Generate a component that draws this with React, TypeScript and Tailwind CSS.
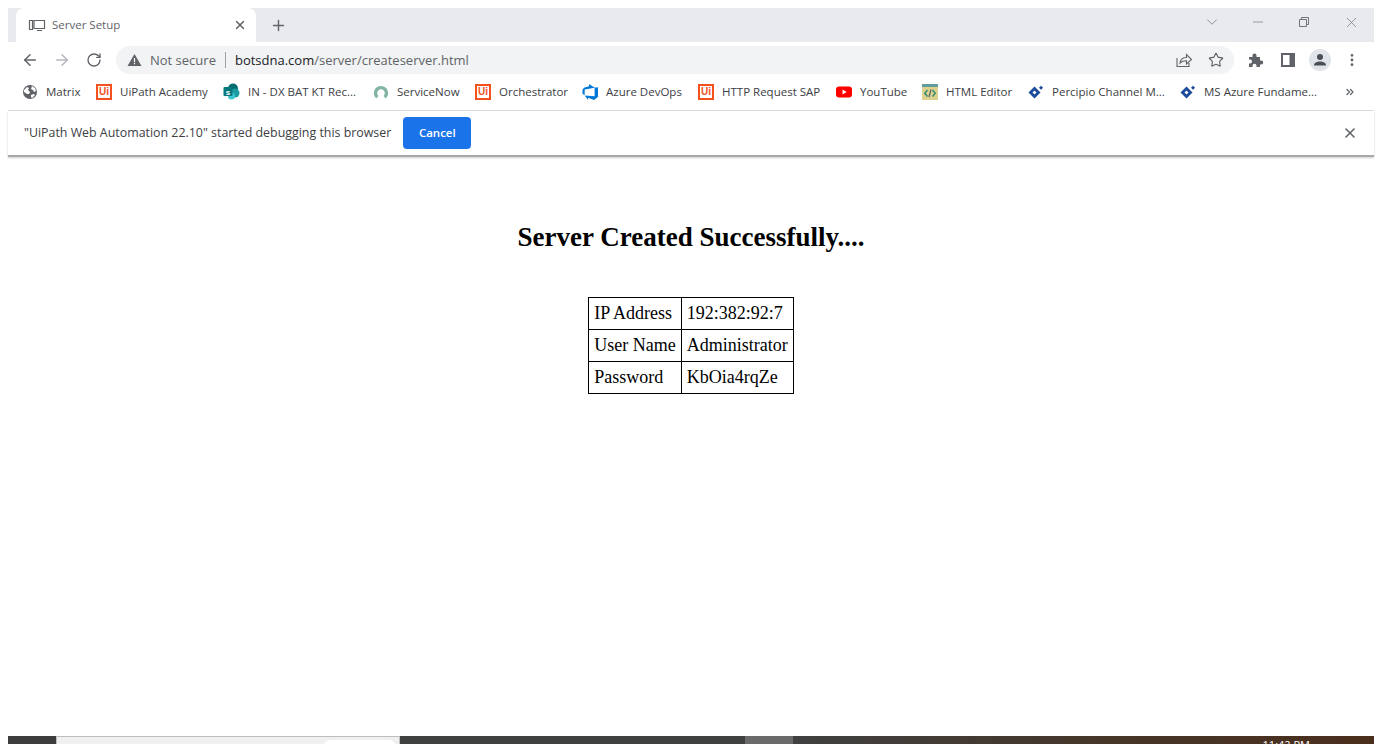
import { ArrowLeft, ArrowRight, RotateCw, Star, Plus, X, Minus, ChevronDown, ChevronsRight, MoreVertical } from "lucide-react";
import type { ReactNode } from "react";

function UiLogo() {
  return (
    <span className="flex h-4 w-4 shrink-0 items-center justify-center border-2 border-[#f4511e] font-['Liberation_Sans',sans-serif] text-[10px] font-bold leading-none text-[#f4511e]">
      Ui
    </span>
  );
}

function GlobeIcon() {
  return (
    <svg width="16" height="16" viewBox="0 0 16 16" className="shrink-0">
      <circle cx="8" cy="8" r="7" fill="#5f6368" />
      <path d="M2 6l3-3 2 1-1 2 2 2-1 2H5L2 8zM10 2l3 2 1 3-2 1-1-2-2-1zM9 11l3-1 1 1-3 3-1-1z" fill="#fff" />
    </svg>
  );
}

function SharePointIcon() {
  return (
    <svg width="17" height="17" viewBox="0 0 17 17" className="shrink-0">
      <circle cx="10" cy="5.5" r="5" fill="#036c70" />
      <circle cx="12" cy="10" r="4.5" fill="#1a9ba1" />
      <circle cx="8.5" cy="13" r="3.5" fill="#37c6d0" />
      <rect x="0.5" y="4" width="9" height="9" rx="1" fill="#03787c" />
      <text x="5" y="11.5" textAnchor="middle" fontSize="8" fontWeight="700" fill="#fff" fontFamily="Liberation Sans, sans-serif">s</text>
    </svg>
  );
}

function ServiceNowIcon() {
  return (
    <svg width="16" height="16" viewBox="0 0 16 16" className="shrink-0">
      <path d="M4.3 13.2a5.5 5.5 0 117.4 0" fill="none" stroke="#81b5a1" strokeWidth="3.4" />
    </svg>
  );
}

function AzureDevOpsIcon() {
  return (
    <svg width="16" height="16" viewBox="0 0 16 16" className="shrink-0">
      <path d="M16 3.2v9.5l-3.9 3.2-6-2.2v2.2L2.7 11.5l9.9.8V3.8zM12.7 3.7L7.1 0v2.2L2 3.8.5 5.7v4.4l2.2 1V5.4z" fill="#0078d7" />
    </svg>
  );
}

function YouTubeIcon() {
  return (
    <svg width="16" height="16" viewBox="0 0 16 16" className="shrink-0">
      <rect x="0" y="2.5" width="16" height="11" rx="3" fill="#ff0000" />
      <path d="M6.5 5.6L10.7 8l-4.2 2.4z" fill="#fff" />
    </svg>
  );
}

function HtmlEditorIcon() {
  return (
    <svg width="16" height="16" viewBox="0 0 16 16" className="shrink-0">
      <rect width="16" height="16" fill="#dcd28e" />
      <rect width="16" height="3" fill="#5f9c9c" />
      <path d="M5.5 6L2.8 9.2l2.7 3.2" fill="none" stroke="#3f8f72" strokeWidth="1.6" />
      <path d="M10.5 6l2.7 3.2-2.7 3.2" fill="none" stroke="#3f8f72" strokeWidth="1.6" />
      <path d="M9 5.5l-2 7.5" fill="none" stroke="#55606a" strokeWidth="1.2" />
    </svg>
  );
}

function PercipioIcon() {
  return (
    <svg width="16" height="16" viewBox="0 0 16 16" className="shrink-0">
      <path d="M6.5 2.5L12.5 8.5 6.5 14.5.5 8.5z" fill="#1c4a9c" />
      <path d="M6.5 6.5L8.5 8.5 6.5 10.5 4.5 8.5z" fill="#fff" />
      <path d="M13 1.8l2 2-2 2-2-2z" fill="#1c4a9c" />
    </svg>
  );
}

const bookmarks: { icon: ReactNode; label: string; width: string }[] = [
  { icon: <GlobeIcon />, label: "Matrix", width: "w-[74px]" },
  { icon: <UiLogo />, label: "UiPath Academy", width: "w-[127px]" },
  { icon: <SharePointIcon />, label: "IN - DX BAT KT Rec...", width: "w-[150px]" },
  { icon: <ServiceNowIcon />, label: "ServiceNow", width: "w-[102px]" },
  { icon: <UiLogo />, label: "Orchestrator", width: "w-[107px]" },
  { icon: <AzureDevOpsIcon />, label: "Azure DevOps", width: "w-[116px]" },
  { icon: <UiLogo />, label: "HTTP Request SAP", width: "w-[138px]" },
  { icon: <YouTubeIcon />, label: "YouTube", width: "w-[86px]" },
  { icon: <HtmlEditorIcon />, label: "HTML Editor", width: "w-[106px]" },
  { icon: <PercipioIcon />, label: "Percipio Channel M...", width: "w-[152px]" },
  { icon: <PercipioIcon />, label: "MS Azure Fundame...", width: "w-[156px]" },
];

const rows = [
  ["IP Address", "192:382:92:7"],
  ["User Name", "Administrator"],
  ["Password", "KbOia4rqZe"],
];

export default function App() {
  return (
    <div className="flex h-[744px] w-[1382px] flex-col overflow-hidden bg-white px-2 pt-2 font-['Open_Sans',sans-serif]">
      {/* tab strip */}
      <div className="flex h-[34px] shrink-0 items-end bg-[#e8eaed] pl-2">
        <div className="flex h-[34px] w-[240px] items-center rounded-t-lg bg-white pl-3 pr-[9px]">
          <svg width="18" height="14" viewBox="0 0 18 14" className="shrink-0">
            <path d="M1.5 2.5h3v9h-3zM6 2.5h10.5v8H6zM9 12.5h5" fill="none" stroke="#5f6368" strokeWidth="1.2" />
          </svg>
          <span className="ml-[6px] text-[11.5px] text-[#5f6368]">Server Setup</span>
          <X size={14} strokeWidth={2.5} className="ml-auto text-[#5f6368]" />
        </div>
        <div className="flex h-[34px] w-[44px] items-center justify-center">
          <Plus size={17} strokeWidth={2} className="text-[#5f6368]" />
        </div>
        <div className="ml-auto flex h-7 items-center self-start text-[#70757a]">
          <ChevronDown size={18} strokeWidth={1} className="mr-[29px]" />
          <Minus size={16} strokeWidth={1} className="mr-[32px]" />
          <svg width="12" height="12" viewBox="0 0 12 12" className="mr-[33px]">
            <path d="M1.5 3.5h7v7h-7zM3.5 3.5v-2h7v7h-2" fill="none" stroke="#70757a" strokeWidth="1" />
          </svg>
          <X size={17} strokeWidth={1} className="mr-[14px]" />
        </div>
      </div>

      {/* toolbar */}
      <div className="flex h-9 shrink-0 items-center bg-white pl-[13px]">
        <ArrowLeft size={18} strokeWidth={2} className="text-[#5f6368]" />
        <ArrowRight size={18} strokeWidth={2} className="ml-[14px] text-[#b4b7bb]" />
        <RotateCw size={16} strokeWidth={2} className="ml-[15px] text-[#5f6368]" />
        <div className="ml-[14px] flex h-7 w-[1118px] items-center rounded-full bg-[#f1f3f4] pl-[11px] pr-[10px]">
          <svg width="15" height="14" viewBox="0 0 15 14" className="shrink-0">
            <path d="M7.5 1L14.5 13H.5z" fill="#5f6368" />
            <path d="M6.9 5h1.2v4.2H6.9zM6.9 10h1.2v1.2H6.9z" fill="#fff" />
          </svg>
          <span className="ml-2 pt-px text-[13px] text-[#5f6368]">Not secure</span>
          <span className="ml-[9px] h-4 w-px bg-[#9aa0a6]" />
          <span className="ml-[9px] pt-px text-[13px] text-[#202124]">
            botsdna.com<span className="text-[#5f6368]">/server/createserver.html</span>
          </span>
          <svg width="16" height="16" viewBox="0 0 16 16" className="ml-auto">
            <path d="M1 6v8.5h12V11M4 11c.5-3.5 3-5.5 6.5-5.5V2.5l5 5-5 4.5V8.8C8 8.8 5.5 9.5 4 11z" fill="none" stroke="#5f6368" strokeWidth="1.1" />
          </svg>
          <Star size={16} strokeWidth={1.7} className="ml-[16px] text-[#5f6368]" />
        </div>
        <svg width="16" height="16" viewBox="0 0 16 16" className="ml-[14px]">
          <path d="M1 5h3.5V3.5a2 2 0 014 0V5H12v3.5h1.2a2 2 0 010 4H12V15H8.5v-1.2a2 2 0 00-4 0V15H1v-3.5h1a2 2 0 000-4H1z" fill="#5f6368" />
        </svg>
        <svg width="14" height="14" viewBox="0 0 14 14" className="ml-[17px]">
          <rect x="1" y="1" width="12" height="12" fill="none" stroke="#5f6368" strokeWidth="2" />
          <rect x="8.5" y="1" width="4.5" height="12" fill="#5f6368" />
        </svg>
        <div className="ml-[14px] flex h-[22px] w-[22px] items-center justify-center rounded-full bg-[#e0e3e8]">
          <svg width="14" height="14" viewBox="0 0 14 14">
            <circle cx="7" cy="4" r="3" fill="#4a4f57" />
            <path d="M1 12.5c0-3 3-4 6-4s6 1 6 4z" fill="#4a4f57" />
          </svg>
        </div>
        <MoreVertical size={16} strokeWidth={2.2} className="ml-[13px] text-[#5f6368]" />
      </div>

      {/* bookmarks */}
      <div className="flex h-[33px] shrink-0 items-center border-b border-[#dadce0] pb-[5px] pl-[14px] text-[#3c4043]">
        {bookmarks.map((b) => (
          <div key={b.label} className={`flex shrink-0 items-center gap-[8px] ${b.width}`}>
            {b.icon}
            <span className="whitespace-nowrap text-[11.5px]">{b.label}</span>
          </div>
        ))}
        <ChevronsRight size={12} strokeWidth={2.6} className="ml-[8px] text-[#5f6368]" />
      </div>

      {/* debugger infobar */}
      <div className="flex h-[46px] shrink-0 items-center border-b-2 border-[#a8a8a8] bg-white pl-4 pr-4 shadow-[0_1px_2px_rgba(0,0,0,0.2)]">
        <span className="text-[12.4px] text-[#3c4043]">"UiPath Web Automation 22.10" started debugging this browser</span>
        <button className="ml-3 flex h-8 w-[68px] items-center justify-center rounded bg-[#1a73e8] text-[11.5px] font-semibold text-white">
          Cancel
        </button>
        <X size={16} strokeWidth={2.4} className="ml-auto text-[#5f6368]" />
      </div>

      {/* page */}
      <div className="flex flex-1 flex-col items-center pt-[65px] font-['Liberation_Serif',serif] text-black">
        <h1 className="text-[27px] font-bold leading-[30px]">Server Created Successfully....</h1>
        <table className="mt-[45px] border-collapse text-[18px] leading-[21px]">
          <tbody>
            {rows.map(([k, v]) => (
              <tr key={k} className="h-8">
                <td className="border border-black px-[5px]">{k}</td>
                <td className="border border-black px-[5px]">{v}</td>
              </tr>
            ))}
          </tbody>
        </table>
      </div>

      {/* desktop taskbar peeking in at the bottom */}
      <div className="flex h-2 shrink-0 overflow-hidden">
        <div className="w-12 bg-[#3d3d3d]" />
        <div className="flex w-[344px] justify-end border-x border-t border-[#bdbdbd] bg-[#f0f0f0] pr-[4px]">
          <div className="mt-[3px] h-4 w-[71px] rounded-t-md bg-white" />
        </div>
        <div className="w-[345px] bg-[#3f4040]" />
        <div className="w-12 bg-[#6a6a6a]" />
        <div className="relative flex-1 bg-gradient-to-r from-[#3f4040] via-[#45372a] to-[#4a2e1c]">
          <span className="absolute right-[64px] top-[2px] font-['Open_Sans',sans-serif] text-[11px] leading-[14px] text-white">11:42 PM</span>
        </div>
      </div>
    </div>
  );
}
